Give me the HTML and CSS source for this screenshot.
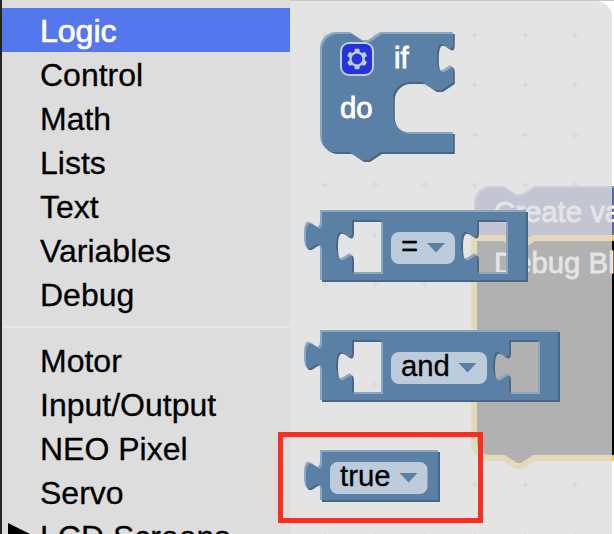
FILE: index.html
```html
<!DOCTYPE html>
<html lang="en">
<head>
<meta charset="utf-8">
<title>Block editor</title>
<link rel="stylesheet" href="styles.css">
</head>
<body>
<div class="editor">
  <nav class="toolbox">
    <ul class="categories">
      <li class="category selected">Logic</li>
      <li class="category">Control</li>
      <li class="category">Math</li>
      <li class="category">Lists</li>
      <li class="category">Text</li>
      <li class="category">Variables</li>
      <li class="category">Debug</li>
      <li class="separator"></li>
      <li class="category">Motor</li>
      <li class="category">Input/Output</li>
      <li class="category">NEO Pixel</li>
      <li class="category">Servo</li>
      <li class="category parent">LCD Screens</li>
    </ul>
  </nav>
  <main class="workspace">
    <svg class="canvas" viewBox="290 0 324 534" width="324" height="534">
      <defs>
        <pattern id="grid" x="300" y="10" width="50" height="50" patternUnits="userSpaceOnUse">
          <path class="grid-cross" d="M22 25h6M25 22v6"/>
        </pattern>
        <path id="if-shape" d="M0 8A8 8 0 0 1 8 0H15l6 4h3l6-4H66.4v5c0 10-8-8-8 7.5s8-2.5 8 7.5V25l-6 4h-3l-6-4h-7a8 8 0 0 0-8 8v9a8 8 0 0 0 8 8H66.4V60H30l-6 4h-3l-6-4H8a8 8 0 0 1-8-8z"/>
        <path id="eq-shape" clip-rule="evenodd" d="M0 0H103V35H0V20c0-10-8 8-8-7.5s8 2.5 8-7.5zM30.5 5H16v5c0 10-8-8-8 7.5s8-2.5 8 7.5v6H30.5zM93 5H78.5v5c0 10-8-8-8 7.5s8-2.5 8 7.5v6H93z"/>
        <path id="and-shape" clip-rule="evenodd" d="M0 0H119V35H0V20c0-10-8 8-8-7.5s8 2.5 8-7.5zM30.5 5H16v5c0 10-8-8-8 7.5s8-2.5 8 7.5v6H30.5zM109 5H94.5v5c0 10-8-8-8 7.5s8-2.5 8 7.5v6H109z"/>
        <path id="true-shape" d="M0 0H59V25H0V20c0-10-8 8-8-7.5s8 2.5 8-7.5z"/>
        <clipPath id="if-clip"><use href="#if-shape"/></clipPath>
        <clipPath id="eq-clip"><use href="#eq-shape"/></clipPath>
        <clipPath id="and-clip"><use href="#and-shape"/></clipPath>
        <clipPath id="true-clip"><use href="#true-shape"/></clipPath>
      </defs>

      <!-- Workspace beneath the flyout -->
      <rect class="paper" x="290" y="0" width="324" height="534"/>
      <rect x="290" y="0" width="324" height="534" fill="url(#grid)"/>
      <path class="create-light" d="M474 238V202a16 16 0 0 1 16-16H504l12 8h6l12-8H640V238z"/>
      <path class="create-block" d="M476 238V204a16 16 0 0 1 16-16H503l12 8h8l12-8H640V238z"/>
      <path class="debug-block" d="M474 238H504l12 8h6l12-8H640V458H534l-12 8h-6l-12-8H490a16 16 0 0 1-16-16z"/>
      <text class="label" x="494" y="222">Create va</text>
      <text class="label" x="494" y="273">Debug Bl</text>

      <!-- Flyout -->
      <path class="flyout" d="M290 1H596a16 16 0 0 1 16 16V534H290z"/>
      <path class="top-edge" d="M290 .5H614"/>

      <g transform="translate(320 32) scale(2)">
        <use class="dark" href="#if-shape" x="1" y="1"/>
        <use class="light" href="#if-shape"/>
        <g clip-path="url(#if-clip)"><use class="face" href="#if-shape" x="1" y="1"/></g>
      </g>
      <g class="mutator" transform="translate(341 43) scale(2)">
        <rect class="mutator-box" width="16" height="16" rx="4"/>
        <path class="mutator-gear" d="m4.203,7.296 0,1.368 -0.92,0.677 -0.11,0.41 0.9,1.559 0.41,0.11 1.043,-0.457 1.187,0.683 0.127,1.134 0.3,0.3 1.8,0 0.3,-0.299 0.127,-1.138 1.185,-0.682 1.046,0.458 0.409,-0.11 0.9,-1.559 -0.11,-0.41 -0.92,-0.677 0,-1.366 0.92,-0.677 0.11,-0.41 -0.9,-1.559 -0.409,-0.109 -1.046,0.458 -1.185,-0.682 -0.127,-1.138 -0.3,-0.299 -1.8,0 -0.3,0.3 -0.126,1.135 -1.187,0.682 -1.043,-0.457 -0.41,0.11 -0.899,1.559 0.108,0.409z"/>
        <circle class="mutator-hub" cx="8" cy="8" r="2.7"/>
      </g>
      <text class="label" x="394" y="68">if</text>
      <text class="label" x="340" y="118">do</text>

      <g transform="translate(320 210) scale(2)">
        <use class="dark" href="#eq-shape" x="1" y="1"/>
        <use class="light" href="#eq-shape"/>
        <g clip-path="url(#eq-clip)"><use class="face" href="#eq-shape" x="1" y="1"/></g>
      </g>
      <rect class="field" x="391" y="232" width="64" height="32" rx="8"/>
      <text class="value" x="401" y="256">=</text>
      <path class="arrow" d="M427 243h18l-9 9.500z"/>

      <g transform="translate(320 330) scale(2)">
        <use class="dark" href="#and-shape" x="1" y="1"/>
        <use class="light" href="#and-shape"/>
        <g clip-path="url(#and-clip)"><use class="face" href="#and-shape" x="1" y="1"/></g>
      </g>
      <rect class="field" x="391" y="352" width="96" height="32" rx="8"/>
      <text class="value" x="401" y="376">and</text>
      <path class="arrow" d="M458.500 363h18l-9 9.500z"/>

      <g transform="translate(320 450) scale(2)">
        <use class="dark" href="#true-shape" x="1" y="1"/>
        <use class="light" href="#true-shape"/>
        <g clip-path="url(#true-clip)"><use class="face" href="#true-shape" x="1" y="1"/></g>
      </g>
      <rect class="field" x="330" y="462" width="97.500" height="32" rx="8"/>
      <text class="value" x="340" y="486">true</text>
      <path class="arrow" d="M399.500 473h18l-9 9.500z"/>
    </svg>
  </main>
  <div class="callout"></div>
</div>
</body>
</html>
```
FILE: styles.css
```css
* {
  box-sizing: border-box;
}

body {
  margin: 0;
  background: #fff;
  font-family: "Liberation Sans", Arial, sans-serif;
}

.editor {
  position: relative;
  display: flex;
  width: 614px;
  height: 534px;
  overflow: hidden;
}

.toolbox {
  flex: none;
  width: 290px;
  height: 534px;
  overflow: hidden;
  border-left: 2px solid #232323;
  background: #ddd;
}

.categories {
  margin: 0;
  padding: 8px 0 0;
  list-style: none;
}

.category {
  height: 44px;
  padding: 1px 0 0 38px;
  color: #000;
  font-size: 32px;
  line-height: 44px;
  white-space: nowrap;
  -webkit-text-stroke: 0.3px #000;
}

.selected {
  background: #5577ee;
  color: #fff;
  -webkit-text-stroke: 0.7px #fff;
}

.separator {
  height: 2px;
  margin: 10px 0;
  background: #e5e5e5;
}

.parent {
  display: flex;
  padding-left: 6px;
}

.parent::before {
  content: "";
  width: 0;
  height: 0;
  margin: 8px 8px 0 0;
  border: solid transparent;
  border-width: 12px 0 12px 24px;
  border-left-color: #000;
}

.workspace {
  flex: none;
  width: 324px;
  height: 534px;
}

.canvas {
  display: block;
}

.paper {
  fill: #fff;
}

.grid-cross {
  fill: none;
  stroke: #ccc;
  stroke-width: 2;
}

.create-light {
  fill: #8c95c0;
}

.create-block {
  fill: #5b67a5;
}

.debug-block {
  fill: #000;
  stroke: #fc3;
  stroke-width: 6;
}

.flyout {
  fill: #ddd;
  fill-opacity: 0.8;
}

.top-edge {
  stroke: #c8c8c8;
}

.dark {
  fill: #496684;
  fill-rule: evenodd;
}

.light {
  fill: #8ca6c0;
  fill-rule: evenodd;
}

.face {
  fill: #5b80a5;
  fill-rule: evenodd;
}

.label,
.value {
  font-size: 29.33px;
}

.label {
  fill: #fff;
  stroke: #fff;
  stroke-width: 0.8;
}

.value {
  fill: #000;
  stroke: #000;
  stroke-width: 0.3;
}

.field {
  fill: #fff;
  fill-opacity: 0.6;
}

.arrow {
  fill: #5b80a5;
}

.mutator {
  opacity: 0.6;
}

.mutator-box {
  fill: #00f;
  stroke: #fff;
}

.mutator-gear {
  fill: #fff;
}

.mutator-hub {
  fill: #00f;
}

.callout {
  position: absolute;
  left: 278px;
  top: 432px;
  width: 205px;
  height: 91px;
  border: 5px solid #ff2d1f;
}
```
